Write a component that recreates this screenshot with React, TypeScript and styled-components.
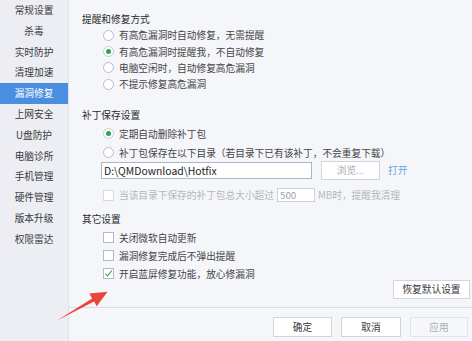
import React from "react";
import styled, { createGlobalStyle } from "styled-components";

const GlobalStyle = createGlobalStyle`
  html, body {
    margin: 0;
    padding: 0;
  }
  body {
    font-family: "Noto Sans CJK SC", "Noto Sans", sans-serif;
    font-size: 9.7px;
    color: #454545;
    background: #f5f6fa;
  }
`;

const StyledWindow = styled.div`
  position: relative;
  display: flex;
  width: 472px;
  height: 341px;
  overflow: hidden;
  background: #f5f6fa;
`;

const StyledSidebar = styled.nav`
  width: 68px;
  flex-shrink: 0;
  display: flex;
  flex-direction: column;
  background: #eceef4;
  border-right: 1px solid #dfe2e9;
`;

const StyledNavItem = styled.div<{ $active?: boolean }>`
  height: 20.8px;
  line-height: 20.8px;
  text-align: center;
  color: ${(p) => (p.$active ? "#ffffff" : "#3a3a3a")};
  background: ${(p) => (p.$active ? "#4a8ee0" : "transparent")};
`;

const StyledMain = styled.div`
  flex: 1;
  display: flex;
  flex-direction: column;
`;

const StyledContent = styled.div`
  flex: 1;
  padding: 11px 2px 8px 13px;
  display: flex;
  flex-direction: column;
`;

const StyledHeading = styled.div<{ $top?: number }>`
  height: 16px;
  line-height: 16px;
  color: #2a2a2a;
  margin-top: ${(p) => p.$top ?? 0}px;
`;

const StyledRow = styled.label<{ $h?: number; $top?: number; $disabled?: boolean }>`
  display: flex;
  align-items: center;
  height: ${(p) => p.$h ?? 16}px;
  margin-top: ${(p) => p.$top ?? 0}px;
  padding-left: 21px;
  gap: 5px;
  color: ${(p) => (p.$disabled ? "#b3b7be" : "#454545")};
  white-space: nowrap;
`;

const StyledRadio = styled.span<{ $checked?: boolean }>`
  width: 9px;
  height: 9px;
  border-radius: 50%;
  border: 1px solid ${(p) => (p.$checked ? "#c9ccd2" : "#b8bcc4")};
  background: #fff;
  display: flex;
  align-items: center;
  justify-content: center;
  flex-shrink: 0;

  &::after {
    content: "";
    display: ${(p) => (p.$checked ? "block" : "none")};
    width: 5px;
    height: 5px;
    border-radius: 50%;
    background: #22a757;
  }
`;

const StyledCheck = styled.span<{ $disabled?: boolean }>`
  width: 9px;
  height: 9px;
  border: 1px solid ${(p) => (p.$disabled ? "#d6d9de" : "#b5b9c1")};
  background: #fff;
  display: flex;
  align-items: center;
  justify-content: center;
  flex-shrink: 0;
`;

const StyledPathRow = styled.div`
  display: flex;
  align-items: center;
  height: 19px;
  padding-left: 19px;
`;

const StyledInput = styled.div<{ $w: number; $h: number; $muted?: boolean }>`
  width: ${(p) => p.$w}px;
  height: ${(p) => p.$h}px;
  box-sizing: border-box;
  border: 1px solid ${(p) => (p.$muted ? "#cdd1d8" : "#aab6c6")};
  background: #fff;
  padding-left: 2px;
  display: flex;
  align-items: center;
  font-size: ${(p) => (p.$muted ? 9.7 : 10.4)}px;
  color: ${(p) => (p.$muted ? "#9da1a8" : "#222")};
  flex-shrink: 0;
`;

const StyledButton = styled.div<{ $w: number; $disabled?: boolean; $muted?: boolean }>`
  width: ${(p) => p.$w}px;
  height: 19px;
  box-sizing: border-box;
  border: 1px solid ${(p) => (p.$disabled ? "#e2e5ea" : "#d2d6dc")};
  background: ${(p) => (p.$disabled ? "#f6f7fa" : "#fff")};
  color: ${(p) => (p.$disabled || p.$muted ? "#a9adb4" : "#3a3a3a")};
  display: flex;
  align-items: center;
  justify-content: center;
  flex-shrink: 0;
`;

const StyledLink = styled.span`
  color: #6aa7db;
  margin-left: 8px;
`;

const StyledLastRow = styled.div`
  display: flex;
  align-items: flex-start;
  justify-content: space-between;
`;

const StyledResetButton = styled(StyledButton)`
  margin-top: 15px;
`;

const StyledFooter = styled.footer`
  height: 34px;
  box-sizing: border-box;
  border-top: 1px solid #dcdfe5;
  padding: 9px 4px 0 0;
  display: flex;
  justify-content: flex-end;
  gap: 9px;

  & > div {
    height: 20px;
  }
`;

const StyledArrow = styled.svg`
  position: absolute;
  left: 0;
  top: 0;
  pointer-events: none;
`;

const NAV = [
  "常规设置",
  "杀毒",
  "实时防护",
  "清理加速",
  "漏洞修复",
  "上网安全",
  "U盘防护",
  "电脑诊所",
  "手机管理",
  "硬件管理",
  "版本升级",
  "权限雷达",
];

const REMIND = [
  "有高危漏洞时自动修复，无需提醒",
  "有高危漏洞时提醒我，不自动修复",
  "电脑空闲时，自动修复高危漏洞",
  "不提示修复高危漏洞",
];

const Tick = () => (
  <svg width="9" height="9" viewBox="0 0 9 9">
    <path d="M1.5 4.6 L3.6 6.8 L7.8 1.6" fill="none" stroke="#3aa85a" strokeWidth="1.1" />
  </svg>
);

export default function App() {
  return (
    <>
      <GlobalStyle />
      <StyledWindow>
        <StyledSidebar>
          {NAV.map((n) => (
            <StyledNavItem key={n} $active={n === "漏洞修复"}>
              {n}
            </StyledNavItem>
          ))}
        </StyledSidebar>

        <StyledMain>
          <StyledContent>
            <StyledHeading>提醒和修复方式</StyledHeading>
            {REMIND.map((r, i) => (
              <StyledRow key={r} $h={16.4}>
                <StyledRadio $checked={i === 1} />
                {r}
              </StyledRow>
            ))}

            <StyledHeading $top={14.4}>补丁保存设置</StyledHeading>
            <StyledRow $top={3}>
              <StyledRadio $checked />
              定期自动删除补丁包
            </StyledRow>
            <StyledRow $top={3}>
              <StyledRadio />
              补丁包保存在以下目录（若目录下已有该补丁，不会重复下载）
            </StyledRow>
            <StyledPathRow>
              <StyledInput $w={211} $h={17}>D:\QMDownload\Hotfix</StyledInput>
              <StyledButton $w={59} $muted style={{ marginLeft: 9 }}>
                浏览...
              </StyledButton>
              <StyledLink>打开</StyledLink>
            </StyledPathRow>
            <StyledRow $h={17} $top={7} $disabled>
              <StyledCheck $disabled />
              当该目录下保存的补丁包总大小超过
              <StyledInput $w={38} $h={14} $muted style={{ marginLeft: -2 }}>
                500
              </StyledInput>
              <span style={{ marginLeft: -2 }}>MB时，提醒我清理</span>
            </StyledRow>

            <StyledHeading $top={7}>其它设置</StyledHeading>
            <StyledRow $h={18} $top={2}>
              <StyledCheck />
              关闭微软自动更新
            </StyledRow>
            <StyledRow $h={18}>
              <StyledCheck />
              漏洞修复完成后不弹出提醒
            </StyledRow>
            <StyledLastRow>
              <StyledRow $h={18}>
                <StyledCheck>
                  <Tick />
                </StyledCheck>
                开启蓝屏修复功能，放心修漏洞
              </StyledRow>
              <StyledResetButton $w={77}>恢复默认设置</StyledResetButton>
            </StyledLastRow>
          </StyledContent>

          <StyledFooter>
            <StyledButton $w={59}>确定</StyledButton>
            <StyledButton $w={60}>取消</StyledButton>
            <StyledButton $w={58} $disabled>
              应用
            </StyledButton>
          </StyledFooter>
        </StyledMain>

        <StyledArrow width="472" height="341" viewBox="0 0 472 341">
          <polygon
            points="57,320.5 92.1,298.4 89.4,293.6 107.5,291.8 96.8,306.2 94.1,301.6"
            fill="#e8463c"
          />
        </StyledArrow>
      </StyledWindow>
    </>
  );
}
